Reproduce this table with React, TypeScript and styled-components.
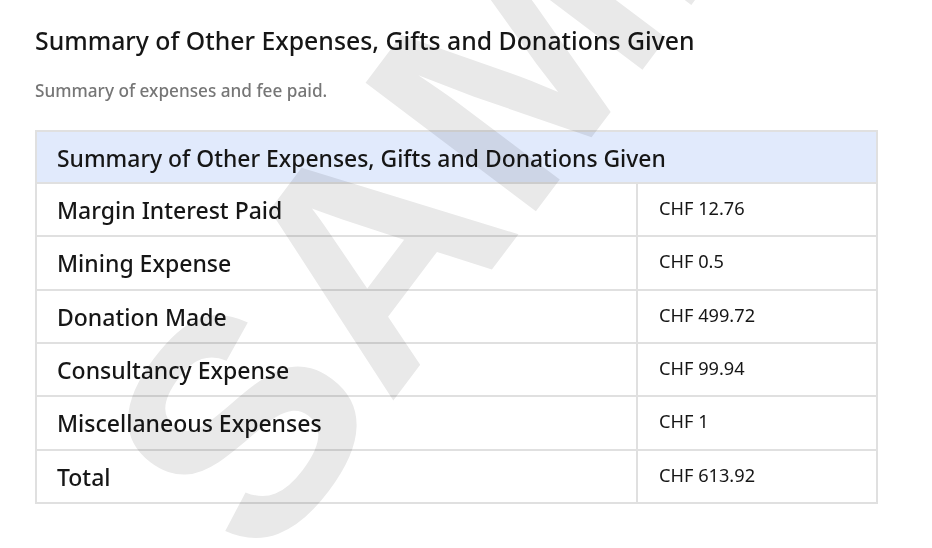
import React from "react";
import styled, { createGlobalStyle } from "styled-components";

const GlobalStyle = createGlobalStyle`
  html, body { margin: 0; padding: 0; background: #ffffff; }
  body {
    font-family: "Noto Sans", "Liberation Sans", sans-serif;
    color: #161616;
  }
`;

const Page = styled.div`
  position: relative;
  width: 932px;
  height: 548px;
  overflow: hidden;
  box-sizing: border-box;
  padding: 22px 0 0 35px;
  background: #ffffff;
`;

const Title = styled.h1`
  margin: 0;
  font-size: 24.8px;
  font-weight: 500;
  line-height: 36px;
  color: #161616;
`;

const Subtitle = styled.p`
  margin: 21px 0 0;
  font-size: 17.2px;
  font-weight: 500;
  line-height: 24px;
  color: #767676;
`;

const Grid = styled.div`
  margin-top: 27px;
  width: 843px;
  box-sizing: border-box;
  display: grid;
  grid-template-columns: 599px 1fr;
  gap: 2px;
  padding: 2px;
  background: #e0e0e0;
`;

const HeaderCell = styled.div`
  grid-column: 1 / -1;
  background: #e1eafc;
  padding: 12px 20px 8px;
  font-size: 22.9px;
  font-weight: 500;
  line-height: 30px;
`;

const LabelCell = styled.div`
  background: #ffffff;
  padding: 12px 20px 10px;
  font-size: 23px;
  font-weight: 500;
  line-height: 29.33px;
`;

const ValueCell = styled.div`
  background: #ffffff;
  padding: 12px 21px 10px;
  font-size: 18.2px;
  font-weight: 400;
  line-height: 24px;
`;

const Watermark = styled.span`
  position: absolute;
  left: 55px;
  top: 414px;
  font-family: "Liberation Sans", Arial, sans-serif;
  font-weight: 700;
  font-size: 310px;
  line-height: 1;
  white-space: nowrap;
  color: #e9e9e9;
  mix-blend-mode: multiply;
  transform-origin: 0 0;
  transform: rotate(-53deg);
  pointer-events: none;
`;

const rows: [string, string][] = [
  ["Margin Interest Paid", "CHF 12.76"],
  ["Mining Expense", "CHF 0.5"],
  ["Donation Made", "CHF 499.72"],
  ["Consultancy Expense", "CHF 99.94"],
  ["Miscellaneous Expenses", "CHF 1"],
  ["Total", "CHF 613.92"],
];

export default function App() {
  return (
    <>
      <GlobalStyle />
      <Page>
        <Title>Summary of Other Expenses, Gifts and Donations Given</Title>
        <Subtitle>Summary of expenses and fee paid.</Subtitle>
        <Grid>
          <HeaderCell>Summary of Other Expenses, Gifts and Donations Given</HeaderCell>
          {rows.map(([label, value]) => (
            <React.Fragment key={label}>
              <LabelCell>{label}</LabelCell>
              <ValueCell>{value}</ValueCell>
            </React.Fragment>
          ))}
        </Grid>
        <Watermark aria-hidden="true">SAMPLE</Watermark>
      </Page>
    </>
  );
}
